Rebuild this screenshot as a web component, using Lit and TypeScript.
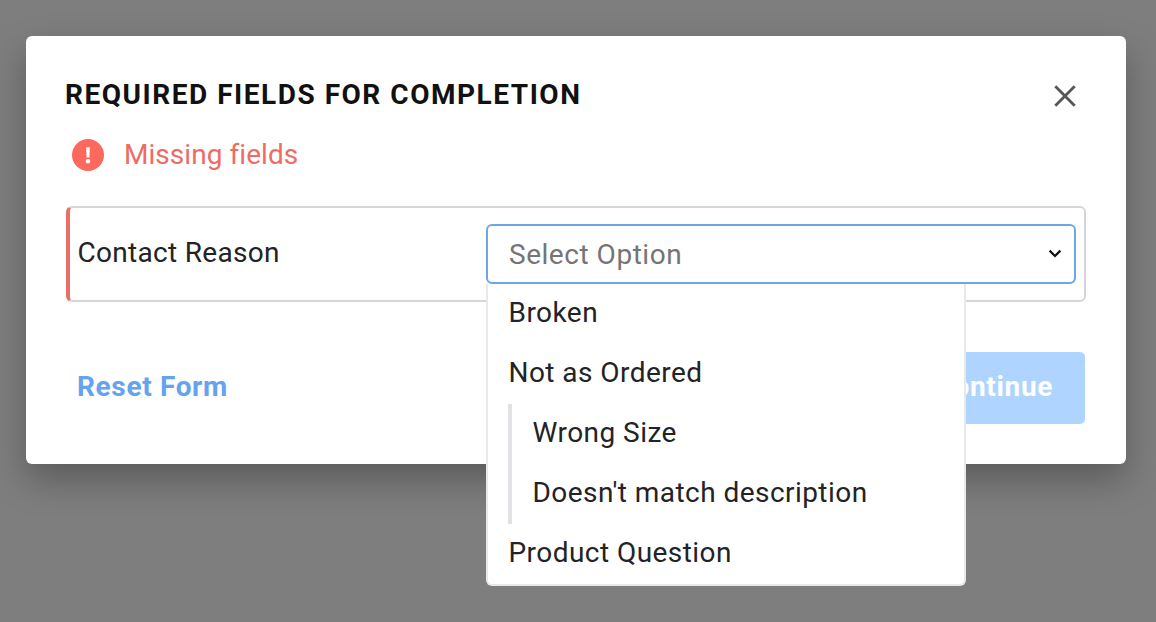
import { LitElement, html, css, nothing } from 'lit';
import { customElement, property, state } from 'lit/decorators.js';

interface ReasonOption {
  label: string;
  children?: ReasonOption[];
}

const CONTACT_REASONS: ReasonOption[] = [
  { label: 'Broken' },
  {
    label: 'Not as Ordered',
    children: [{ label: 'Wrong Size' }, { label: "Doesn't match description" }],
  },
  { label: 'Product Question' },
];

@customElement('tree-select')
class TreeSelect extends LitElement {
  @property() placeholder = '';
  @property({ attribute: false }) options: ReasonOption[] = [];
  @state() private open = true;
  @state() private value = '';

  static styles = css`
    :host {
      display: block;
      position: relative;
    }

    .control {
      box-sizing: border-box;
      display: flex;
      align-items: center;
      justify-content: space-between;
      height: 60px;
      padding: 2px 11px 0 21px;
      border: 2px solid #6ea5e3;
      border-radius: 6px;
      background: #fff;
      color: #757575;
      letter-spacing: 0.53px;
      cursor: pointer;
    }

    .chevron {
      display: block;
      width: 16px;
      height: 16px;
      margin-bottom: 4px;
    }

    .menu {
      box-sizing: border-box;
      position: absolute;
      top: 60px;
      left: 0;
      z-index: 1;
      width: 480px;
      border: 2px solid #e9e9eb;
      border-top: none;
      border-radius: 0 0 6px 6px;
      background: #fff;
      color: #232326;
      letter-spacing: 0.45px;
    }

    .option {
      box-sizing: border-box;
      display: flex;
      align-items: center;
      height: 60px;
      padding: 0 20.5px 2px;
      white-space: nowrap;
      cursor: pointer;
    }

    .group {
      margin-left: 20px;
      border-left: 4px solid #e3e1e5;
    }
  `;

  private select(label: string) {
    this.value = label;
    this.open = false;
  }

  private renderOption(option: ReasonOption): unknown {
    return html`
      <div class="option" @click=${() => this.select(option.label)}>${option.label}</div>
      ${option.children
        ? html`<div class="group">${option.children.map((child) => this.renderOption(child))}</div>`
        : nothing}
    `;
  }

  render() {
    return html`
      <div class="control" @click=${() => (this.open = !this.open)}>
        <span>${this.value || this.placeholder}</span>
        <svg class="chevron" viewBox="0 0 16 16" fill="none" stroke="#111" stroke-width="2.2">
          <path d="M2.6 5.6 8 11l5.4-5.4" />
        </svg>
      </div>
      ${this.open
        ? html`<div class="menu">${this.options.map((option) => this.renderOption(option))}</div>`
        : nothing}
    `;
  }
}

@customElement('app-root')
class AppRoot extends LitElement {
  static styles = css`
    :host {
      box-sizing: border-box;
      display: block;
      height: 100vh;
      padding: 36px 30px 0 26px;
      overflow: hidden;
      background: #7e7e7f;
      color: #232326;
      font-family: Roboto, 'Liberation Sans', sans-serif;
      font-size: 28px;
      line-height: 36px;
      letter-spacing: 0.3px;
    }

    .dialog {
      box-sizing: border-box;
      height: 428px;
      padding: 40px 40px 0;
      border-radius: 6px;
      background: #fff;
      box-shadow: 0 16px 36px rgba(0, 0, 0, 0.28);
    }

    .header {
      display: flex;
      align-items: center;
      justify-content: space-between;
      height: 38px;
    }

    .title {
      margin: 0 0 0 -1px;
      color: #111;
      font-size: 28px;
      font-weight: 700;
      letter-spacing: 1.52px;
    }

    .close {
      display: block;
      width: 24px;
      height: 24px;
      margin: 2px 9px 0 0;
    }

    .alert {
      display: flex;
      align-items: center;
      gap: 20px;
      margin: 23px 0 0 6px;
      color: #ec6d64;
      letter-spacing: 0.05px;
    }

    .alert-icon {
      display: block;
      width: 32px;
      height: 32px;
    }

    .field {
      box-sizing: border-box;
      display: flex;
      align-items: center;
      justify-content: space-between;
      height: 96px;
      margin-top: 33px;
      padding: 0 8px 0 7.5px;
      border: 2px solid #d5d6d8;
      border-left: 4px solid #ec6d64;
      border-radius: 6px;
    }

    .field-label {
      margin-bottom: 2px;
    }

    .field-select {
      width: 590px;
    }

    .actions {
      display: flex;
      align-items: center;
      justify-content: space-between;
      margin: 50px 1px 0 11px;
      font-weight: 700;
      letter-spacing: 0.65px;
    }

    .reset {
      margin-bottom: 2px;
      color: #65a3ee;
      cursor: pointer;
    }

    .continue {
      padding: 17px 32px 19px;
      border-radius: 5px;
      background: #aed4ff;
      color: #fff;
    }
  `;

  render() {
    return html`
      <div class="dialog" role="dialog">
        <div class="header">
          <h2 class="title">REQUIRED FIELDS FOR COMPLETION</h2>
          <svg class="close" viewBox="0 0 24 24" fill="none" stroke="#555" stroke-width="2.8">
            <path d="M2.3 2.3l19.4 19.4M21.7 2.3L2.3 21.7" />
          </svg>
        </div>
        <div class="alert">
          <svg class="alert-icon" viewBox="0 0 32 32">
            <circle cx="16" cy="16" r="16" fill="#fd695c" />
            <path d="M14.1 8.2h3.8l-.5 10.4h-2.8z" fill="#fff" />
            <circle cx="16" cy="22.3" r="2.2" fill="#fff" />
          </svg>
          <span>Missing fields</span>
        </div>
        <div class="field">
          <span class="field-label">Contact Reason</span>
          <tree-select
            class="field-select"
            placeholder="Select Option"
            .options=${CONTACT_REASONS}
          ></tree-select>
        </div>
        <div class="actions">
          <span class="reset">Reset Form</span>
          <span class="continue">Continue</span>
        </div>
      </div>
    `;
  }
}
